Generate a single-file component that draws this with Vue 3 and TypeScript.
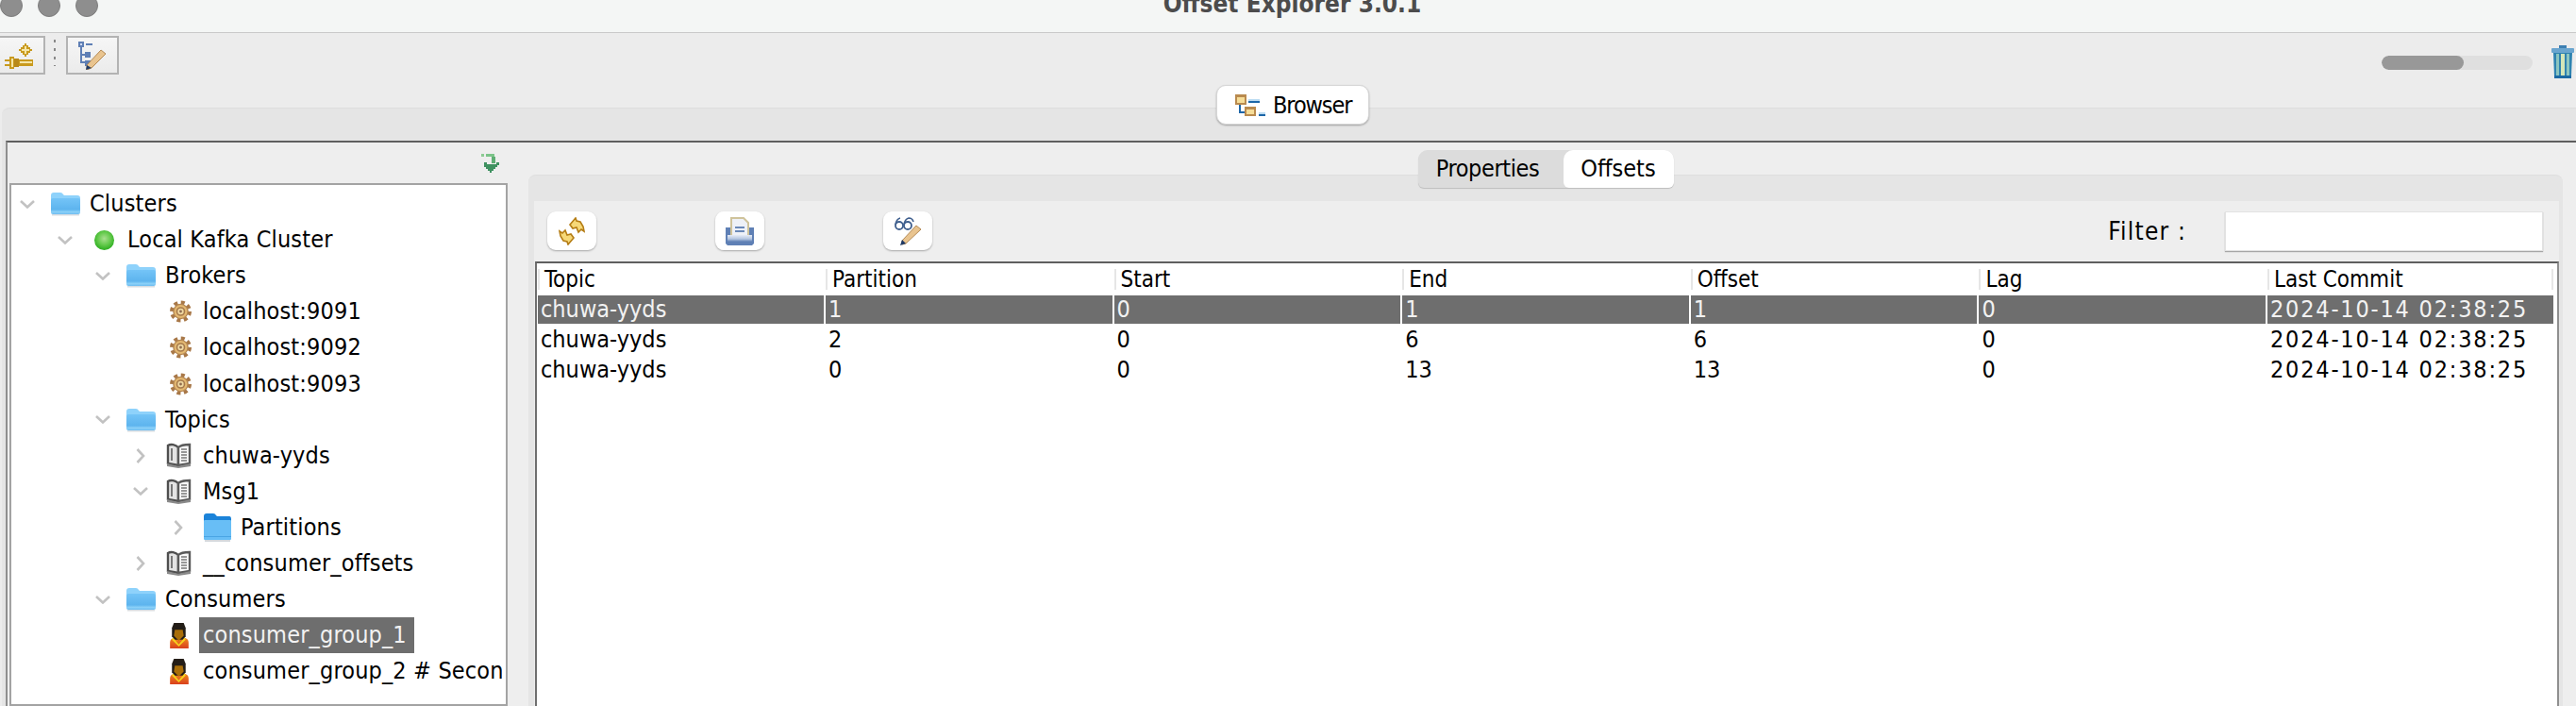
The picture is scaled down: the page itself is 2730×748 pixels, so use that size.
<template>
  <div class="window">
    <svg class="icon-defs" width="0" height="0" aria-hidden="true">
      <defs>
        <linearGradient id="folderFront" x1="0" y1="0" x2="0" y2="1">
          <stop offset="0" stop-color="#74c4f7" />
          <stop offset="0.7" stop-color="#5db4ee" />
          <stop offset="0.85" stop-color="#8ad0f8" />
          <stop offset="1" stop-color="#6fbdf0" />
        </linearGradient>
        <radialGradient id="ballFill" cx="0.5" cy="0.42" r="0.6">
          <stop offset="0" stop-color="#a9e08f" />
          <stop offset="0.55" stop-color="#62c94a" />
          <stop offset="1" stop-color="#27ab1c" />
        </radialGradient>
        <linearGradient id="shirtFill" x1="0" y1="0" x2="0" y2="1">
          <stop offset="0" stop-color="#f08a20" />
          <stop offset="1" stop-color="#d9401c" />
        </linearGradient>
        <linearGradient id="printerFill" x1="0" y1="0" x2="0" y2="1">
          <stop offset="0" stop-color="#e6ecf6" />
          <stop offset="0.6" stop-color="#b4c5e0" />
          <stop offset="1" stop-color="#5f80b5" />
        </linearGradient>
      </defs>
      <symbol id="folder" viewBox="0 0 31 26">
        <path d="M0 4q0-3 3-3h7q2 0 3 2l1 1h14q3 0 3 3v3H0z" fill="#8ed2fb" />
        <rect x="0" y="7" width="31" height="17" rx="2" fill="url(#folderFront)" />
        <rect x="1" y="24" width="29" height="1.5" fill="#d8dde2" />
      </symbol>
      <symbol id="folder-dark" viewBox="0 0 31 32">
        <path d="M1 4q0-3 3-3h7q2 0 3 2l1 1h13q2 0 2 3v3H1z" fill="#1b83d9" />
        <rect x="1" y="8" width="29" height="21" rx="1" fill="#68bef6" />
        <rect x="1" y="25" width="29" height="1" fill="#4aa5e4" />
        <rect x="2" y="29" width="27" height="2" fill="#d4d9de" />
      </symbol>
      <symbol id="ball" viewBox="0 0 20 20">
        <circle cx="10" cy="10" r="10" fill="url(#ballFill)" />
      </symbol>
      <symbol id="gear" viewBox="0 0 23 24">
        <circle cx="11.5" cy="12" r="9.5" fill="none" stroke="#a87848" stroke-width="4" stroke-dasharray="4 3.45" />
        <circle cx="11.5" cy="12" r="7.6" fill="#e3b871" stroke="#b58752" stroke-width="1.4" />
        <circle cx="11.5" cy="12" r="4" fill="#f0d9a2" stroke="#a77a4c" stroke-width="1.6" />
        <circle cx="11.5" cy="12" r="1.4" fill="#8d6a50" />
      </symbol>
      <symbol id="book" viewBox="0 0 28 27">
        <path d="M2 3v19l11 2V5C10 2 5 1 2 3z" fill="#e4e4e4" stroke="#4f4f4f" stroke-width="2.4" />
        <path d="M13 5c3-3 8-3 12-3v20l-12 2z" fill="#fafafa" stroke="#5a5a5a" stroke-width="2.4" />
        <path d="M16 7h6M16 10h6M16 13h6M16 16h6M16 19h6" stroke="#777" stroke-width="1.6" />
        <path d="M6 6v13" stroke="#777" stroke-width="2" />
        <path d="M1 22l12 3 13-3v3l-13 2-12-2z" fill="#8a8a8a" />
      </symbol>
      <symbol id="person" viewBox="0 0 21 28">
        <path d="M1 27v-6q0-4 5-5h9q5 1 5 5v6z" fill="url(#shirtFill)" />
        <path d="M5 1h10l2 5v9l-3 3H6l-3-3V6z" fill="#231d17" />
        <path d="M6 8h8l1 6-5 5-5-5z" fill="#a96e09" />
        <path d="M4 16l6 7 6-7 1 2-7 7-7-7z" fill="#f5d21e" />
      </symbol>
    </svg>

    <header class="titlebar">
      <div class="lights">
        <span class="light"></span>
        <span class="light"></span>
        <span class="light"></span>
      </div>
      <div class="app-title">Offset Explorer  3.0.1</div>
    </header>

    <div class="toolbar">
      <button class="tool-btn first">
        <svg width="30" height="28" viewBox="0 0 30 28" shape-rendering="crispEdges">
          <path d="M21 1h2v2h2v2h2v2h2v2h-2v2h-2v2h-2v2h-2v-2h-2v-2h-2V9h-2V7h2V5h2V3h2z" fill="#c99a1e" />
          <path d="M21 4h2v3h3v2h-3v3h-2V9h-3V7h3z" fill="#f5e6a8" />
          <rect x="0" y="18" width="5" height="2" fill="#c99a1e" />
          <rect x="0" y="23" width="5" height="2" fill="#c99a1e" />
          <rect x="5" y="15" width="5" height="13" fill="#c99a1e" />
          <rect x="7" y="17" width="2" height="9" fill="#f5e6a8" />
          <rect x="10" y="17" width="5" height="9" fill="#b8891a" />
          <rect x="15" y="18" width="15" height="7" fill="#c99a1e" />
          <rect x="16" y="20" width="13" height="2" fill="#f5e6a8" />
        </svg>
      </button>
      <div class="tool-sep"></div>
      <button class="tool-btn">
        <svg width="30" height="30" viewBox="0 0 30 30">
          <path d="M3 6v16h5M3 14h5" fill="none" stroke="#5f7fb5" stroke-width="2" />
          <rect x="0" y="0" width="6" height="6" fill="#5f7fb5" />
          <rect x="2" y="2" width="2" height="2" fill="#cfdaf0" />
          <rect x="8" y="2" width="7" height="2" fill="#5f7fb5" />
          <rect x="7" y="11" width="6" height="6" fill="#5f7fb5" />
          <rect x="7" y="20" width="6" height="6" fill="#5f7fb5" />
          <path d="M9 25L24 9l5 4-15 15-5 2z" fill="#e9c48f" stroke="#b48a55" stroke-width="1" />
          <path d="M9 25l-1 5 6-2z" fill="#1f3a66" />
        </svg>
      </button>
      <div class="progress"><div class="progress-fill"></div></div>
      <svg class="trash" width="24" height="35" viewBox="0 0 24 35">
        <rect x="8" y="0" width="8" height="3" fill="#3d7fb2" />
        <rect x="0" y="3" width="24" height="5" rx="1" fill="#6aa5cf" />
        <path d="M2 8h20l-1 25H3z" fill="#2f83b0" />
        <rect x="5" y="9" width="3" height="23" fill="#8cc5c0" />
        <rect x="10" y="9" width="4" height="23" fill="#d5e6b8" />
        <rect x="16" y="9" width="3" height="23" fill="#8cc5c0" />
        <rect x="3" y="32" width="18" height="3" fill="#1b69a3" />
      </svg>
    </div>

    <section class="main-panel">
      <div class="browser-row">
        <button class="browser-tab">
          <svg width="32" height="23" viewBox="0 0 32 23" shape-rendering="crispEdges">
            <rect x="0" y="0" width="12" height="11" fill="#b98a4e" />
            <rect x="2" y="3" width="8" height="6" fill="#f6dd98" />
            <rect x="14" y="7" width="12" height="2" fill="#1d66a8" />
            <rect x="14" y="5" width="12" height="2" fill="#bcdcf2" />
            <path d="M4 11h2v7h5v2H4z" fill="#1d66a8" />
            <rect x="10" y="13" width="12" height="10" fill="#b98a4e" />
            <rect x="12" y="16" width="8" height="5" fill="#f6dd98" />
            <rect x="25" y="21" width="7" height="2" fill="#1d66a8" />
            <rect x="25" y="19" width="7" height="2" fill="#bcdcf2" />
          </svg>
          <span>Browser</span>
        </button>
      </div>

      <div class="main-body">
        <aside class="left-pane">
          <div class="arrow-row">
            <svg width="22" height="20" viewBox="0 0 22 20" shape-rendering="crispEdges">
              <rect x="0" y="0" width="3" height="3" fill="#8ccb93" />
              <rect x="5" y="0" width="9" height="3" fill="#7cc489" />
              <rect x="11" y="3" width="4" height="7" fill="#5fae74" />
              <path d="M3 9h3v2h10V9h3v3h-2v2h-2v2h-2v2h-2v2h-2v-2H7v-2H5v-2H3z" fill="#3f9160" />
            </svg>
          </div>
          <div class="tree">
            <div
              v-for="node in treeNodes"
              :key="node.label"
              class="tree-row"
              :style="{ paddingLeft: 5 + node.level * 40 + 'px' }"
            >
              <span class="chevron">
                <svg v-if="node.arrow === 'down'" width="16" height="9" viewBox="0 0 16 9">
                  <path d="M1 1l7 6.5L15 1" fill="none" stroke="#c2c2c2" stroke-width="2.6" />
                </svg>
                <svg v-else-if="node.arrow === 'right'" width="10" height="16" viewBox="0 0 10 16">
                  <path d="M1.5 1l6.5 7-6.5 7" fill="none" stroke="#c2c2c2" stroke-width="2.6" />
                </svg>
              </span>
              <span class="node-icon">
                <svg :class="'ic-' + node.icon" class="node-svg"><use :href="'#' + node.icon" /></svg>
              </span>
              <span class="node-label" :class="{ selected: node.selected }">{{ node.label }}</span>
            </div>
          </div>
        </aside>

        <div class="right-panel">
          <div class="tab-row">
            <div class="segments">
              <div class="segment first">Properties</div>
              <div class="segment active">Offsets</div>
            </div>
          </div>
          <div class="right-body">
            <div class="action-row">
              <button class="action-btn">
                <svg width="28" height="30" viewBox="0 0 28 30">
                  <path d="M12 8l6-7 1 3 4 1 3 5 1 5-3-2-3 3-2-5-4 1z" fill="#f6d878" stroke="#b57d14" stroke-width="1.6" />
                  <path d="M16 22l-6 7-1-3-4-1-3-5-1-5 3 2 3-3 2 5 4-1z" fill="#f6d878" stroke="#b57d14" stroke-width="1.6" />
                </svg>
              </button>
              <button class="action-btn">
                <svg width="30" height="30" viewBox="0 0 30 30">
                  <path d="M6 1h13l5 5v15H6z" fill="#eef1f7" stroke="#cfc39b" stroke-width="2" />
                  <path d="M10 11h10M10 15h10" stroke="#6a88b8" stroke-width="2" />
                  <path d="M0 11h5v11h20V11h5v17l-2 2H2l-2-2z" fill="#5f80b5" />
                  <rect x="2" y="19" width="26" height="7" fill="url(#printerFill)" />
                </svg>
              </button>
              <button class="action-btn">
                <svg width="28" height="30" viewBox="0 0 28 30">
                  <circle cx="5" cy="9" r="4" fill="none" stroke="#3f5f8e" stroke-width="1.8" />
                  <circle cx="14" cy="9" r="4" fill="none" stroke="#3f5f8e" stroke-width="1.8" />
                  <path d="M1 8q1-6 5-7M10 8q1-6 5-7 4 0 5 4" fill="none" stroke="#3f5f8e" stroke-width="1.6" />
                  <path d="M8 25L23 9l5 4-16 15-4 1z" fill="#e9c48f" stroke="#b48a55" stroke-width="1" />
                  <path d="M8 24l-2 6 6-2z" fill="#1f3a66" />
                </svg>
              </button>
              <label class="filter">
                <span class="filter-label">Filter :</span>
                <input class="filter-input" type="text" />
              </label>
            </div>

            <div class="table">
              <div class="table-head">
                <div v-for="col in columns" :key="col" class="head-cell">{{ col }}</div>
              </div>
              <div
                v-for="(row, i) in rows"
                :key="i"
                class="table-row"
                :class="{ selected: i === 0 }"
              >
                <div v-for="(val, j) in row" :key="j" class="cell" :class="{ stamp: j === 6 }">{{ val }}</div>
              </div>
            </div>
          </div>
        </div>
      </div>
    </section>
  </div>
</template>

<script setup lang="ts">
interface TreeNode {
  label: string
  level: number
  arrow?: 'down' | 'right'
  icon: string
  selected?: boolean
}

const treeNodes: TreeNode[] = [
  { label: 'Clusters', level: 0, arrow: 'down', icon: 'folder' },
  { label: 'Local Kafka Cluster', level: 1, arrow: 'down', icon: 'ball' },
  { label: 'Brokers', level: 2, arrow: 'down', icon: 'folder' },
  { label: 'localhost:9091', level: 3, icon: 'gear' },
  { label: 'localhost:9092', level: 3, icon: 'gear' },
  { label: 'localhost:9093', level: 3, icon: 'gear' },
  { label: 'Topics', level: 2, arrow: 'down', icon: 'folder' },
  { label: 'chuwa-yyds', level: 3, arrow: 'right', icon: 'book' },
  { label: 'Msg1', level: 3, arrow: 'down', icon: 'book' },
  { label: 'Partitions', level: 4, arrow: 'right', icon: 'folder-dark' },
  { label: '__consumer_offsets', level: 3, arrow: 'right', icon: 'book' },
  { label: 'Consumers', level: 2, arrow: 'down', icon: 'folder' },
  { label: 'consumer_group_1', level: 3, icon: 'person', selected: true },
  { label: 'consumer_group_2 # Second consumer group', level: 3, icon: 'person' },
]

const columns = ['Topic', 'Partition', 'Start', 'End', 'Offset', 'Lag', 'Last Commit']

const rows = [
  ['chuwa-yyds', '1', '0', '1', '1', '0', '2024-10-14 02:38:25'],
  ['chuwa-yyds', '2', '0', '6', '6', '0', '2024-10-14 02:38:25'],
  ['chuwa-yyds', '0', '0', '13', '13', '0', '2024-10-14 02:38:25'],
]
</script>

<style>
html,
body {
  margin: 0;
  overflow: hidden;
}
</style>

<style scoped>
.window {
  width: 2730px;
  height: 748px;
  overflow: hidden;
  background: #ececec;
  display: flex;
  flex-direction: column;
  font-family: "DejaVu Sans Condensed", "DejaVu Sans", sans-serif;
  font-size: 25px;
  color: #000;
}

.icon-defs {
  position: absolute;
}

.titlebar {
  height: 34px;
  flex: none;
  box-sizing: content-box;
  background: #f4f6f5;
  border-bottom: 1px solid #c9c9c9;
  position: relative;
  overflow: hidden;
}

.lights {
  display: flex;
  gap: 16px;
  margin-top: -6px;
}

.light {
  width: 24px;
  height: 24px;
  box-sizing: border-box;
  border-radius: 50%;
  background: #8e8e8e;
  border: 1px solid #7e7e7e;
}

.app-title {
  position: absolute;
  top: -1px;
  left: 0;
  right: 0;
  padding-left: 9px;
  text-align: center;
  white-space: pre;
  font-weight: bold;
  font-size: 26px;
  line-height: 11px;
  color: #4c4c4c;
}

.toolbar {
  height: 79px;
  flex: none;
  box-sizing: border-box;
  padding-top: 3px;
  display: flex;
  align-items: flex-start;
  position: relative;
}

.tool-btn {
  width: 56px;
  height: 41px;
  box-sizing: border-box;
  padding: 0;
  border: 2px solid #b3b3b3;
  background: linear-gradient(#f6f6f6, #ebebeb);
  display: flex;
  align-items: center;
  justify-content: center;
}

.tool-btn.first {
  margin-left: -8px;
}

.tool-sep {
  width: 2px;
  height: 28px;
  margin: 4px 11px 0 9px;
  background: repeating-linear-gradient(#888 0 3px, transparent 3px 9px);
}

.progress {
  margin-left: auto;
  margin-top: 21px;
  width: 160px;
  height: 15px;
  border-radius: 8px;
  background: #dfdfdf;
  overflow: hidden;
}

.progress-fill {
  width: 87px;
  height: 100%;
  border-radius: 8px;
  background: #989898;
}

.trash {
  margin: 10px 2px 0 20px;
  flex: none;
}

.main-panel {
  width: 2736px;
  margin-left: 2px;
  flex: 1;
  min-height: 0;
  display: flex;
  flex-direction: column;
  border-top: 1px solid #dedede;
  border-radius: 8px 8px 0 0;
  background: #e5e5e5;
}

.browser-row {
  height: 34px;
  flex: none;
  display: flex;
  justify-content: center;
  align-items: flex-start;
}

.browser-tab {
  margin-top: -25px;
  width: 162px;
  height: 42px;
  padding: 0 0 0 19px;
  border: 1px solid #d6d6d6;
  border-radius: 10px;
  background: #fff;
  box-shadow: 0 1px 2px rgba(0, 0, 0, 0.3);
  font: inherit;
  font-size: 25px;
  letter-spacing: -1.1px;
  display: flex;
  align-items: center;
  justify-content: flex-start;
  gap: 8px;
}

.main-body {
  flex: 1;
  min-height: 0;
  display: flex;
  margin-left: 4px;
  background: #eeeeee;
  border-top: 2px solid #5f5f5f;
  border-left: 2px solid #8f8f8f;
}

.left-pane {
  width: 530px;
  margin-left: 2px;
  flex: none;
  display: flex;
  flex-direction: column;
}

.arrow-row {
  height: 43px;
  flex: none;
  padding-top: 12px;
  box-sizing: border-box;
  display: flex;
  justify-content: flex-end;
  padding-right: 8px;
}

.tree {
  flex: 1;
  min-height: 0;
  box-sizing: border-box;
  width: 528px;
  background: #fff;
  border: 2px solid #a3a3a3;
  padding: 1px 4px 0 0;
  overflow: hidden;
  letter-spacing: 0.15px;
}

.tree-row {
  height: 38.1px;
  display: flex;
  align-items: center;
  white-space: nowrap;
  overflow: hidden;
}

.chevron {
  width: 24px;
  flex: none;
  display: flex;
  justify-content: center;
  align-items: center;
}

.node-icon {
  width: 41px;
  margin-left: 13px;
  flex: none;
  display: flex;
  align-items: center;
}

.node-svg {
  display: block;
}

.ic-folder {
  width: 31px;
  height: 26px;
}

.ic-folder-dark {
  width: 31px;
  height: 32px;
  margin-left: 1px;
}

.ic-ball {
  width: 21px;
  height: 21px;
  margin-left: 6px;
}

.ic-gear {
  width: 23px;
  height: 24px;
  margin-left: 6px;
}

.ic-book {
  width: 28px;
  height: 27px;
  margin-left: 2px;
}

.ic-person {
  width: 22px;
  height: 29px;
  margin-left: 5px;
}

.node-label {
  height: 38px;
  line-height: 38px;
}

.node-label.selected {
  margin-left: -4px;
  padding: 0 8px 0 4px;
  background: #6e6e6e;
  color: #f2f2f2;
}

.right-panel {
  flex: none;
  width: 2156px;
  margin: 34px 0 0 20px;
  background: #e5e5e5;
  border-top: 1px solid #dedede;
  border-radius: 8px 8px 0 0;
  display: flex;
  flex-direction: column;
}

.tab-row {
  height: 27px;
  flex: none;
  display: flex;
  justify-content: center;
  align-items: flex-start;
  position: relative;
  z-index: 1;
}

.segments {
  margin-top: -27px;
  display: flex;
  height: 40px;
  border-radius: 10px 10px 6px 6px;
  background: #dcdcdc;
  box-shadow: 0 1px 1px rgba(0, 0, 0, 0.18);
}

.segment {
  line-height: 40px;
  text-align: center;
  width: 117px;
}

.segment.first {
  width: 154px;
  box-sizing: border-box;
  padding-right: 6px;
  letter-spacing: -0.4px;
}

.segment.active {
  background: #fff;
  border-radius: 10px 10px 6px 6px;
}

.right-body {
  flex: 1;
  min-height: 0;
  margin: 0 4px 0 6px;
  background: #eeeeee;
  display: flex;
  flex-direction: column;
}

.action-row {
  height: 64px;
  flex: none;
  box-sizing: border-box;
  padding: 11px 17px 0 14px;
  display: flex;
  align-items: flex-start;
  gap: 126px;
}

.action-btn {
  width: 52px;
  height: 41px;
  padding: 0;
  border: none;
  border-radius: 9px;
  background: #fff;
  box-shadow: 0 1px 2px rgba(0, 0, 0, 0.3);
  display: flex;
  align-items: center;
  justify-content: center;
}

.filter {
  margin-left: auto;
  display: flex;
  align-items: center;
  gap: 41px;
}

.filter-label {
  font-size: 26px;
  line-height: 42px;
  letter-spacing: 1.2px;
}

.filter-input {
  width: 337px;
  height: 42px;
  box-sizing: border-box;
  border: none;
  outline: none;
  background: #fff;
  box-shadow: 0 1px 1px rgba(0, 0, 0, 0.3), 0 0 0 1px #e2e2e2 inset;
}

.table {
  flex: 1;
  min-height: 0;
  margin-left: 1px;
  background: #fff;
  border-top: 2px solid #5f5f5f;
  border-left: 2px solid #6f6f6f;
  border-right: 2px solid #8f8f8f;
  padding: 0 4px 0 1px;
}

.table-head,
.table-row {
  display: grid;
  grid-template-columns: 305px repeat(5, 305.6px) 1fr;
}

.table-head {
  height: 34px;
  padding-top: 6px;
  box-sizing: border-box;
}

.head-cell {
  height: 22px;
  line-height: 22px;
  font-size: 24px;
  padding-left: 5px;
  border-left: 2px solid #e6e6e6;
}

.head-cell:last-child {
  border-right: 2px solid #e6e6e6;
}

.table-row {
  height: 32px;
}

.cell {
  height: 30px;
  line-height: 30px;
  padding-left: 3px;
  border-right: 2px solid #fff;
}

.cell:last-child {
  border-right: none;
}

.cell.stamp {
  letter-spacing: 1.8px;
}

.table-row.selected .cell {
  background: #6e6e6e;
  color: #f2f2f2;
}
</style>
